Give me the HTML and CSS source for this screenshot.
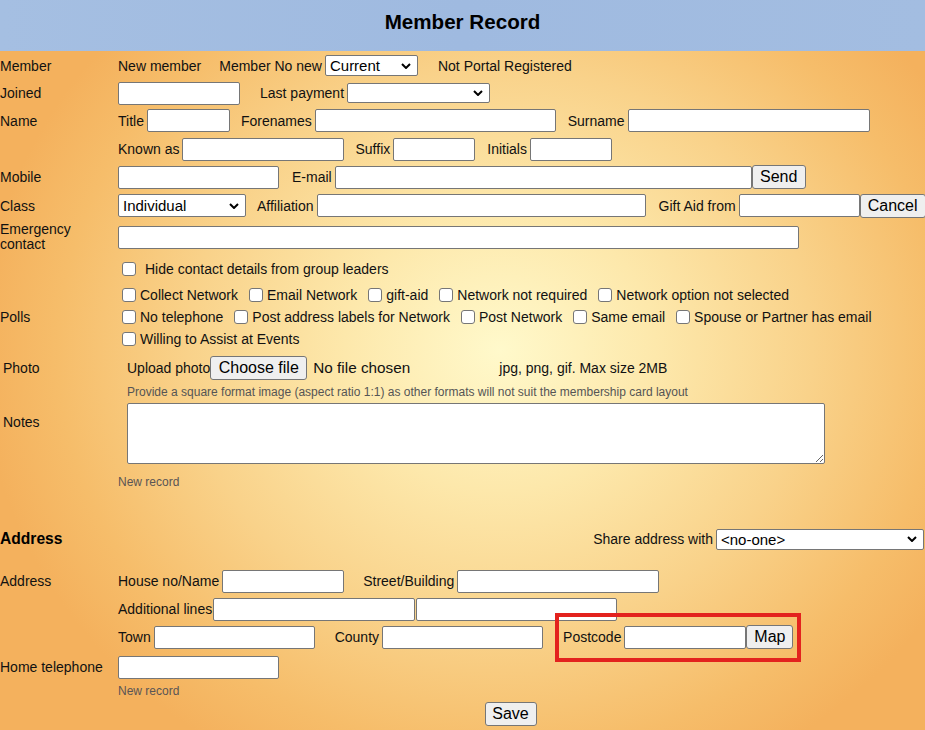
FILE: index.html
```html
<!DOCTYPE html>
<html lang="en">
<head>
<meta charset="utf-8">
<title>Member Record</title>
<link rel="stylesheet" href="styles.css">
</head>
<body>
<header class="topbar"><h1>Member Record</h1></header>
<main class="form">
  <div class="row h29">
    <span class="lbl">Member</span>
    <div class="cnt">
      <span class="txt gap18">New member</span>
      <label class="fld gap20"><span>Member No new</span>
        <span class="sel w93"><select><option>Current</option></select><svg viewBox="0 0 10 6"><path d="M1 1l4 4 4-4"/></svg></span>
      </label>
      <span class="txt">Not Portal Registered</span>
    </div>
  </div>
  <div class="row h26">
    <span class="lbl">Joined</span>
    <div class="cnt">
      <input class="inp w122 gap20" type="text">
      <label class="fld"><span>Last payment</span>
        <span class="sel w143 short"><select><option></option></select><svg viewBox="0 0 10 6"><path d="M1 1l4 4 4-4"/></svg></span>
      </label>
    </div>
  </div>
  <div class="row h29">
    <span class="lbl">Name</span>
    <div class="cnt">
      <label class="fld gap11"><span>Title</span><input class="inp w83" type="text"></label>
      <label class="fld gap12"><span>Forenames</span><input class="inp w241" type="text"></label>
      <label class="fld"><span>Surname</span><input class="inp w242" type="text"></label>
    </div>
  </div>
  <div class="row h28">
    <span class="lbl"></span>
    <div class="cnt">
      <label class="fld gap11"><span>Known as</span><input class="inp w162" type="text"></label>
      <label class="fld gap12"><span>Suffix</span><input class="inp w82" type="text"></label>
      <label class="fld"><span>Initials</span><input class="inp w82" type="text"></label>
    </div>
  </div>
  <div class="row h28">
    <span class="lbl">Mobile</span>
    <div class="cnt">
      <input class="inp w161 gap13" type="text">
      <label class="fld"><span>E-mail</span><input class="inp w417" type="text"></label>
      <button class="btn w54" type="button">Send</button>
    </div>
  </div>
  <div class="row h29">
    <span class="lbl">Class</span>
    <div class="cnt">
      <span class="sel w128 gap11"><select><option>Individual</option></select><svg viewBox="0 0 10 6"><path d="M1 1l4 4 4-4"/></svg></span>
      <label class="fld gap13"><span>Affiliation</span><input class="inp w329" type="text"></label>
      <label class="fld"><span>Gift Aid from</span><input class="inp w121" type="text"></label>
      <button class="btn w66" type="button">Cancel</button>
    </div>
  </div>
  <div class="row h34">
    <span class="lbl two">Emergency contact</span>
    <div class="cnt">
      <input class="inp w681" type="text">
    </div>
  </div>
  <div class="row h30">
    <span class="lbl"></span>
    <div class="cnt">
      <label class="chk hide"><input type="checkbox"><span>Hide contact details from group leaders</span></label>
    </div>
  </div>
  <div class="row polls">
    <span class="lbl">Polls</span>
    <div class="cnt col">
      <div class="chkline">
        <label class="chk"><input type="checkbox"><span>Collect Network</span></label>
        <label class="chk"><input type="checkbox"><span>Email Network</span></label>
        <label class="chk"><input type="checkbox"><span>gift-aid</span></label>
        <label class="chk"><input type="checkbox"><span>Network not required</span></label>
        <label class="chk"><input type="checkbox"><span>Network option not selected</span></label>
      </div>
      <div class="chkline">
        <label class="chk"><input type="checkbox"><span>No telephone</span></label>
        <label class="chk"><input type="checkbox"><span>Post address labels for Network</span></label>
        <label class="chk"><input type="checkbox"><span>Post Network</span></label>
        <label class="chk"><input type="checkbox"><span>Same email</span></label>
        <label class="chk"><input type="checkbox"><span>Spouse or Partner has email</span></label>
      </div>
      <div class="chkline">
        <label class="chk"><input type="checkbox"><span>Willing to Assist at Events</span></label>
      </div>
    </div>
  </div>
  <div class="row h35">
    <span class="lbl ind">Photo</span>
    <div class="cnt pad">
      <span class="txt">Upload photo</span>
      <span class="file"><button class="btn choose" type="button">Choose file</button><span class="nofile">No file chosen</span></span>
      <span class="txt">jpg, png, gif. Max size 2MB</span>
    </div>
  </div>
  <div class="row hint-row">
    <span class="lbl"></span>
    <div class="cnt pad"><span class="hint">Provide a square format image (aspect ratio 1:1) as other formats will not suit the membership card layout</span></div>
  </div>
  <div class="row notes">
    <span class="lbl ind">Notes</span>
    <div class="cnt pad"><textarea class="area"></textarea></div>
  </div>
  <div class="row h28">
    <span class="lbl"></span>
    <div class="cnt"><span class="note">New record</span></div>
  </div>

  <div class="addr-head">
    <h2>Address</h2>
    <label class="fld"><span>Share address with</span>
      <span class="sel w208"><select><option>&lt;no-one&gt;</option></select><svg viewBox="0 0 10 6"><path d="M1 1l4 4 4-4"/></svg></span>
    </label>
  </div>
  <div class="row h28 addr-first">
    <span class="lbl">Address</span>
    <div class="cnt">
      <label class="fld gap19"><span>House no/Name</span><input class="inp w122" type="text"></label>
      <label class="fld"><span>Street/Building</span><input class="inp w202" type="text"></label>
    </div>
  </div>
  <div class="row h28">
    <span class="lbl"></span>
    <div class="cnt">
      <label class="fld tight"><span>Additional lines</span><input class="inp w202" type="text"></label>
      <input class="inp w201 joined" type="text">
    </div>
  </div>
  <div class="row h28">
    <span class="lbl"></span>
    <div class="cnt">
      <label class="fld gap20"><span>Town</span><input class="inp w161" type="text"></label>
      <label class="fld gap20"><span>County</span><input class="inp w161" type="text"></label>
      <span class="highlight">
        <label class="fld"><span>Postcode</span><input class="inp w122" type="text"></label>
        <button class="btn w47" type="button">Map</button>
      </span>
    </div>
  </div>
  <div class="row h32">
    <span class="lbl">Home telephone</span>
    <div class="cnt"><input class="inp w161" type="text"></div>
  </div>
  <div class="row h16">
    <span class="lbl"></span>
    <div class="cnt"><span class="note">New record</span></div>
  </div>
  <div class="save-row"><button class="btn w52" type="button">Save</button></div>
</main>
</body>
</html>
```
FILE: styles.css
```css
html, body {
  margin: 0;
  padding: 0;
}
body {
  width: 925px;
  min-height: 730px;
  font-family: "Liberation Sans", Arial, sans-serif;
  font-size: 14px;
  color: #111;
  background:
    radial-gradient(ellipse 520px 470px at 500px 350px, #fff9cb 0%, #fde8ab 30%, #f9d28a 60%, #f6bd6a 85%, #f4b15d 100%);
  background-color: #f4b05c;
  overflow: hidden;
}
.topbar {
  height: 51px;
  background: linear-gradient(90deg, #a5bfe2, #9fbae0 50%, #a3bde1);
}
.topbar h1 {
  margin: 0;
  line-height: 44px;
  text-align: center;
  font-size: 20.6px;
  font-weight: bold;
  color: #000;
}
.form {
  display: flex;
  flex-direction: column;
}
.row {
  display: flex;
  align-items: center;
}
.h16 { height: 16px; }
.h26 { height: 26px; }
.h28 { height: 28px; }
.h29 { height: 29px; }
.h30 { height: 30px; }
.h32 { height: 32px; }
.h34 { height: 34px; }
.h35 { height: 35px; }
.lbl {
  width: 118px;
  flex: none;
}
.lbl.two {
  line-height: 15px;
  width: 112px;
  padding-right: 6px;
}
.lbl.ind {
  width: 115px;
  padding-left: 3px;
}
.cnt {
  display: flex;
  align-items: center;
}
.cnt.pad { padding-left: 9px; }
.cnt.col {
  flex-direction: column;
  align-items: flex-start;
}
.txt { white-space: nowrap; }
.fld {
  display: flex;
  align-items: center;
  white-space: nowrap;
}
.fld > span:first-child { margin-right: 3px; }
.fld.tight > span:first-child { margin-right: 1px; }

.inp {
  box-sizing: border-box;
  height: 23px;
  margin: 0;
  padding: 1px 3px;
  border: 1px solid #767676;
  border-radius: 2px;
  background: #fff;
  font: 13.3px "Liberation Sans", Arial, sans-serif;
}
.inp.joined { margin-left: 1px; }

.cnt .gap11 { margin-right: 11px; }
.cnt .gap12 { margin-right: 12px; }
.cnt .gap13 { margin-right: 13px; }
.cnt .gap18 { margin-right: 18px; }
.cnt .gap19 { margin-right: 19px; }
.cnt .gap20 { margin-right: 20px; }

.w47 { width: 47px; }
.w52 { width: 52px; }
.w54 { width: 54px; }
.w66 { width: 66px; }
.w82 { width: 82px; }
.w83 { width: 83px; }
.w93 { width: 93px; }
.w121 { width: 121px; }
.w122 { width: 122px; }
.w128 { width: 128px; }
.w143 { width: 143px; }
.w161 { width: 161px; }
.w162 { width: 162px; }
.w201 { width: 201px; }
.w202 { width: 202px; }
.w208 { width: 208px; }
.w241 { width: 241px; }
.w242 { width: 242px; }
.w329 { width: 329px; }
.w417 { width: 417px; }
.w681 { width: 681px; }

.sel {
  position: relative;
  display: inline-block;
  flex: none;
  height: 21px;
}
.sel select {
  -webkit-appearance: none;
  appearance: none;
  box-sizing: border-box;
  width: 100%;
  height: 100%;
  margin: 0;
  padding: 0 20px 0 4px;
  border: 1px solid #767676;
  border-radius: 2px;
  background: #fff;
  color: #000;
  font: 15px "Liberation Sans", Arial, sans-serif;
  line-height: 19px;
}
.sel.short { height: 20px; }
.sel.w128 { height: 23px; }
.sel svg {
  position: absolute;
  right: 7px;
  top: 50%;
  width: 10px;
  height: 6px;
  margin-top: -3px;
  pointer-events: none;
  fill: none;
  stroke: #000;
  stroke-width: 2;
}

.btn {
  box-sizing: border-box;
  height: 24px;
  margin: 0;
  padding: 0 6px;
  border: 1px solid #767676;
  border-radius: 3px;
  background: #efefef;
  color: #000;
  font: 16px "Liberation Sans", Arial, sans-serif;
}
.btn.choose {
  width: 97px;
  padding: 0;
}
.file {
  display: flex;
  align-items: center;
  width: 289px;
}
.nofile {
  margin-left: 6px;
  font-size: 15.3px;
}

.polls { height: 66px; }
.chkline {
  display: flex;
  align-items: center;
  height: 22px;
}
.chk {
  display: flex;
  align-items: center;
  margin-right: 7px;
  white-space: nowrap;
}
.chk input {
  -webkit-appearance: none;
  appearance: none;
  box-sizing: border-box;
  width: 14px;
  height: 14px;
  margin: 0 4px 0 4px;
  border: 1px solid #767676;
  border-radius: 3px;
  background: #fff;
}
.chk.hide input { margin-right: 9px; }

.hint-row { height: 13px; }
.hint {
  font-size: 12px;
  color: #555;
  white-space: nowrap;
}
.notes {
  height: 70px;
  align-items: flex-start;
}
.notes .lbl { padding-top: 16px; }
.area {
  box-sizing: border-box;
  width: 698px;
  height: 61px;
  margin: 5px 0 0 0;
  border: 1px solid #767676;
  border-radius: 2px;
  background: #fff;
}
.note {
  font-size: 12px;
  color: #5a5555;
}

.addr-head {
  display: flex;
  align-items: center;
  justify-content: space-between;
  height: 38px;
  margin-top: 24px;
  padding-right: 1px;
}
.addr-head h2 {
  margin: 0;
  font-size: 15.6px;
  font-weight: bold;
  color: #000;
}
.addr-first { margin-top: 9px; }

.highlight {
  position: relative;
  display: flex;
  align-items: center;
}
.highlight::after {
  content: "";
  position: absolute;
  left: -8px;
  right: -8px;
  top: -12px;
  bottom: -13px;
  border: 4px solid #e3221e;
  pointer-events: none;
}

.save-row {
  display: flex;
  justify-content: center;
  align-items: center;
  height: 30px;
  padding-left: 96px;
}
```
